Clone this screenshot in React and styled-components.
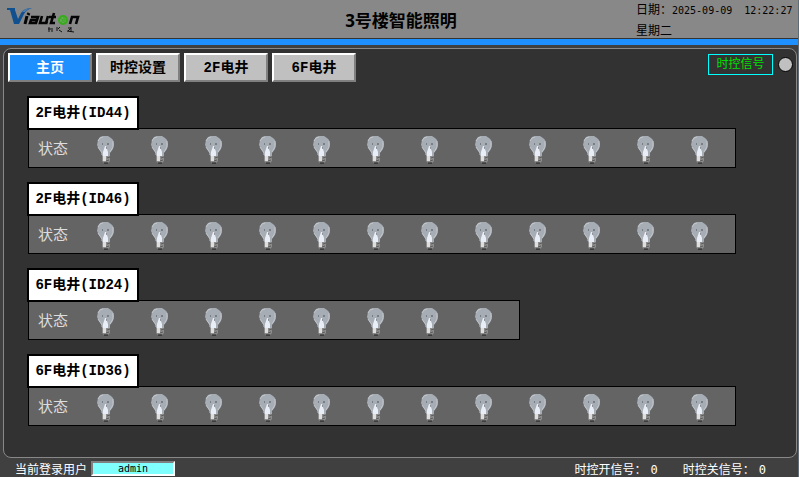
import React from "react";
import styled, { createGlobalStyle } from "styled-components";

const GlobalStyles = createGlobalStyle`
	* {
		box-sizing: border-box;
	}

	body {
		margin: 0;
		background: #404040;
		font-family: "DejaVu Sans Mono", "Noto Sans CJK SC", monospace;
		font-size: 12px;
	}
`;

const Screen = styled.div`
	display: flex;
	flex-direction: column;
	min-height: 100vh;
	border-right: 1px solid #5f6d76;
`;

const Header = styled.header`
	display: grid;
	grid-template-columns: 1fr auto 1fr;
	align-items: center;
	height: 45px;
	padding: 0 7px;
	background: #888888;
	border-bottom: 6px solid #1e90ff;
	box-shadow: inset 0 -1px 0 #333333;
`;

const Title = styled.h1`
	margin: 0;
	padding-left: 4px;
	color: #000000;
	font: bold 17px/20px "Noto Sans", "Noto Sans CJK SC", sans-serif;
`;

const Clock = styled.div`
	justify-self: end;
	width: 155px;
	color: #000000;
	line-height: 20px;
	white-space: pre;
`;

const Digits = styled.span`
	font-size: 10px;
`;

const Panel = styled.main`
	flex: 1;
	margin: 3px 1px 0 3px;
	padding: 4px 3px 4px 4px;
	background: #323232;
	border: 1px solid #888888;
	border-radius: 8px;
`;

const Toolbar = styled.div`
	display: flex;
	justify-content: space-between;
	align-items: flex-start;
`;

const Tabs = styled.nav`
	display: flex;
	gap: 4px;
`;

const Tab = styled.button`
	width: 84px;
	height: 29px;
	padding: 0;
	color: ${(props) => (props.$active ? "#ffffff" : "#000000")};
	background: ${(props) => (props.$active ? "#1e90ff" : "#c0c0c0")};
	border: 2px solid;
	border-color: #ffffff #808080 #808080 #ffffff;
	font: bold 14px/20px "Liberation Mono", "Noto Sans CJK SC", monospace;
`;

const Signal = styled.div`
	display: flex;
	align-items: center;
	gap: 5px;
	padding-top: 1px;
`;

const SignalName = styled.span`
	width: 65px;
	border: 1px solid #00ffff;
	color: #00e000;
	line-height: 19px;
	text-align: center;
`;

const Lamp = styled.span`
	width: 15px;
	height: 15px;
	background: #c0c0c0;
	border: 1px solid #000000;
	border-radius: 50%;
`;

const Groups = styled.div`
	display: flex;
	flex-direction: column;
	align-items: flex-start;
	gap: 14px;
	padding: 14px 19px;
`;

const Group = styled.section`
	display: flex;
	flex-direction: column;
	align-items: flex-start;
`;

const GroupName = styled.h2`
	z-index: 1;
	width: 112px;
	margin: 0 0 -2px;
	background: #ffffff;
	border: 2px solid #000000;
	color: #000000;
	font: bold 14px/30px "Liberation Mono", "Noto Sans CJK SC", monospace;
	text-align: center;
	white-space: nowrap;
`;

const StatusRow = styled.div`
	display: flex;
	align-items: center;
	height: 40px;
	margin-left: 1px;
	padding: 0 9px;
	background: #646464;
	border: 1px solid #000000;
`;

const StatusName = styled.span`
	width: 40px;
	color: #dddddd;
	font: 15px/20px "Noto Sans CJK SC", sans-serif;
`;

const BulbCell = styled.span`
	display: flex;
	justify-content: center;
	width: 54px;
	padding: 4px 0 0 2px;
`;

const Footer = styled.footer`
	display: flex;
	justify-content: space-between;
	height: 19px;
	padding: 3px 32px 0 15px;
	color: #ffffff;
	line-height: 18px;
`;

const Login = styled.div`
	display: flex;
	gap: 4px;
`;

const UserInput = styled.input`
	width: 84px;
	height: 15px;
	padding: 0;
	background: #80ffff;
	border: 2px solid;
	border-color: #808080 #ffffff #ffffff #808080;
	color: #000000;
	font: 10px/11px "DejaVu Sans Mono", monospace;
	text-align: center;
`;

const Counters = styled.div`
	display: flex;
	gap: 25px;
`;

const Counter = styled.span`
	display: flex;
	gap: 4px;
`;

const Logo = () => (
	<svg width="74" height="28" viewBox="0 0 74 28" role="img" aria-label="Viauton">
		<path d="M0 1h8v2l3 9 3-6Q17 1 25 1q-6 2-8 6l-5 10H7L3 3H0z" fill="#10508f" />
		<path d="M15 5q3-4 10-4-5 1-7 4z" fill="#4b7eaf" />
		<g fill="none" stroke="#050505">
			<path d="M22 6l-1 2M20 9l-2 8" strokeWidth="3" />
			<path
				d="M24 10h7l-2 6h-6l1-3h6M35 9l-2 7h6l2-7M39 17l1-3M47 6l-3 10h4M42 10h7M63 17l2-7h6l-2 7"
				strokeWidth="2.6"
			/>
		</g>
		<ellipse cx="56" cy="13" rx="4" ry="4" fill="#69a95a" stroke="#36ab1c" strokeWidth="2" />
		<path d="M53 11l3 2-2 3M57 10v3h3M56 14l3 2" fill="none" stroke="#36ab1c" />
		<path
			d="M42 20v5M41 22h3M45 21v4M50 20v4M51 22l2-2M52 23l3 2M61 21h3l-3 3M64 20v5M60 24l7 1"
			fill="none"
			stroke="#111111"
		/>
	</svg>
);

const Bulb = () => (
	<svg width="18" height="28" viewBox="0 0 18 28" role="img" aria-label="关">
		<path d="M6 0h5l3 2 2 2 1 4-1 5-3 4v3H5v-3L2 13 0 9l1-5 2-3z" fill="#a7adb5" />
		<path d="M1 5l2-3 3-1M1 11l4 6v2M16 5v6l-3 5" fill="none" stroke="#c2c7cc" />
		<path d="M8 10h1l2 6v4H6v-4z" fill="#e9edf5" />
		<path d="M5 8h1M10 8h2M9 12h1" stroke="#4c5157" />
		<path d="M5 20h8v5l-2 2H7l-2-2z" fill="#8d8d8d" />
		<path d="M6 20h3v5H6z" fill="#dedede" />
		<path d="M10 22l3-1M9 25l3-1" stroke="#5c5c5c" />
		<path d="M7 27h4" stroke="#191919" />
	</svg>
);

const tabs = ["主页", "时控设置", "2F电井", "6F电井"];

const groups = [
	{ name: "2F电井(ID44)", bulbs: 12 },
	{ name: "2F电井(ID46)", bulbs: 12 },
	{ name: "6F电井(ID24)", bulbs: 8 },
	{ name: "6F电井(ID36)", bulbs: 12 },
];

const App = () => {
	return (
		<Screen>
			<GlobalStyles />
			<Header>
				<Logo />
				<Title>3号楼智能照明</Title>
				<Clock>
					<div>
						日期：<Digits>2025-09-09  12:22:27</Digits>
					</div>
					<div>星期二</div>
				</Clock>
			</Header>
			<Panel>
				<Toolbar>
					<Tabs>
						{tabs.map((tab, i) => (
							<Tab key={tab} type="button" $active={i === 0}>
								{tab}
							</Tab>
						))}
					</Tabs>
					<Signal>
						<SignalName>时控信号</SignalName>
						<Lamp />
					</Signal>
				</Toolbar>
				<Groups>
					{groups.map((group) => (
						<Group key={group.name}>
							<GroupName>{group.name}</GroupName>
							<StatusRow>
								<StatusName>状态</StatusName>
								{Array.from({ length: group.bulbs }, (_, i) => (
									<BulbCell key={i}>
										<Bulb />
									</BulbCell>
								))}
							</StatusRow>
						</Group>
					))}
				</Groups>
			</Panel>
			<Footer>
				<Login>
					<label htmlFor="user">当前登录用户</label>
					<UserInput id="user" defaultValue="admin" readOnly />
				</Login>
				<Counters>
					<Counter>
						时控开信号：<span>0</span>
					</Counter>
					<Counter>
						时控关信号：<span>0</span>
					</Counter>
				</Counters>
			</Footer>
		</Screen>
	);
};
export default App;
